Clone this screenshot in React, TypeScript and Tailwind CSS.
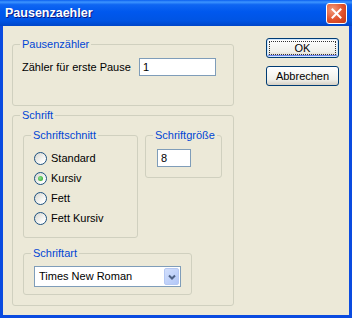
import type { ReactNode } from 'react';

// Windows XP style "Pausenzaehler" dialog

function Group({ title, className, children }: { title: string; className: string; children?: ReactNode }) {
  return (
    <fieldset className={`border border-[#D0D0BF] rounded-[3px] ${className}`}>
      <legend className="ml-[7px] px-[2px] text-[#0046D5] leading-[13px]">{title}</legend>
      {children}
    </fieldset>
  );
}

function Radio({ label, checked }: { label: string; checked?: boolean }) {
  return (
    <div className="flex items-center h-[20px]">
      <span className="w-[13px] h-[13px] rounded-full border border-[#1C5180] bg-[linear-gradient(135deg,#D6D6CE,#FFFFFF_80%)] flex items-center justify-center">
        {checked && (
          <span className="w-[5px] h-[5px] rounded-full bg-[radial-gradient(circle_at_40%_40%,#8BE08B,#21A121)]" />
        )}
      </span>
      <span className="ml-[4px] leading-[13px]">{label}</span>
    </div>
  );
}

function TextBox({ value, className }: { value: string; className: string }) {
  return (
    <div className={`h-[18px] border border-[#7F9DB9] bg-white flex items-center pl-[3px] leading-[13px] ${className}`}>
      {value}
    </div>
  );
}

function XpButton({ label, isDefault }: { label: string; isDefault?: boolean }) {
  return (
    <div
      className={`h-[20px] w-[73px] rounded-[3px] border border-[#003C74] bg-[linear-gradient(#FFFFFF,#F0F0EA_70%,#D6D0C5)] flex items-center justify-center p-[2px] ${
        isDefault ? 'shadow-[inset_0_0_0_1px_#CEE7FF,inset_0_-1px_0_1px_#6982EE]' : ''
      }`}
    >
      <span
        className={`w-full h-full flex items-center justify-center leading-[13px] ${
          isDefault ? 'border border-dotted border-[#333]' : ''
        }`}
      >
        {label}
      </span>
    </div>
  );
}

export default function App() {
  return (
    <div className="w-[352px] h-[318px] flex flex-col font-['Liberation_Sans',Arial,sans-serif] text-[11px] text-black">
      {/* Title bar */}
      <div className="h-[26px] shrink-0 flex items-center justify-between pl-[5px] pr-[5px] bg-[linear-gradient(#0A5FEF,#3D95FF_8%,#0F66F2_18%,#0058EE_45%,#0054E3_80%,#0046C8)]">
        <span className="text-white font-bold text-[12.5px] leading-[16px] [text-shadow:1px_1px_#0A1883]">
          Pausenzaehler
        </span>
        <div className="w-[21px] h-[21px] rounded-[3px] border border-white bg-[radial-gradient(circle_at_30%_30%,#F29B7C,#E0512B_55%,#C0391A)] flex items-center justify-center">
          <svg width="11" height="11" viewBox="0 0 11 11">
            <path d="M1.5 1.5 L9.5 9.5 M9.5 1.5 L1.5 9.5" stroke="#fff" strokeWidth="2" strokeLinecap="square" />
          </svg>
        </div>
      </div>

      {/* Body */}
      <div className="flex-1 flex bg-[#ECE9D8] border-l-[3px] border-r-[3px] border-b-[3px] border-[#0A4BE0] pt-[12px] pl-[9px] pr-[10px]">
        <div className="w-[222px] flex flex-col">
          <Group title="Pausenzähler" className="h-[68px]">
            <div className="flex items-center pt-[7px] pl-[9px]">
              <span className="w-[117px] leading-[13px]">Zähler für erste Pause</span>
              <TextBox value="1" className="w-[77px]" />
            </div>
          </Group>

          <Group title="Schrift" className="h-[197px] mt-[3px]">
            <div className="pt-[7px] pl-[10px] flex flex-col">
              <div className="flex items-start">
                <Group title="Schriftschnitt" className="w-[115px] h-[109px]">
                  <div className="pt-[6px] pl-[10px]">
                    <Radio label="Standard" />
                    <Radio label="Kursiv" checked />
                    <Radio label="Fett" />
                    <Radio label="Fett Kursiv" />
                  </div>
                </Group>
                <Group title="Schriftgröße" className="w-[77px] h-[49px] ml-[7px]">
                  <div className="pt-[7px] pl-[11px]">
                    <TextBox value="8" className="w-[34px]" />
                  </div>
                </Group>
              </div>

              <Group title="Schriftart" className="w-[169px] h-[48px] mt-[9px]">
                <div className="pt-[6px] pl-[10px]">
                  <div className="w-[147px] h-[21px] border border-[#7F9DB9] bg-white flex items-center">
                    <span className="flex-1 pl-[4px] leading-[13px]">Times New Roman</span>
                    <span className="w-[15px] h-[17px] mr-[1px] rounded-[2px] border border-[#B5C8F3] bg-[linear-gradient(135deg,#D2DFFC,#B2C7F7)] flex items-center justify-center">
                      <svg width="8" height="6" viewBox="0 0 8 6">
                        <path d="M1 1.5 L4 4.5 L7 1.5" fill="none" stroke="#4D6185" strokeWidth="2" />
                      </svg>
                    </span>
                  </div>
                </div>
              </Group>
            </div>
          </Group>
        </div>

        <div className="ml-[32px] flex flex-col gap-[8px]">
          <XpButton label="OK" isDefault />
          <XpButton label="Abbrechen" />
        </div>
      </div>
    </div>
  );
}
